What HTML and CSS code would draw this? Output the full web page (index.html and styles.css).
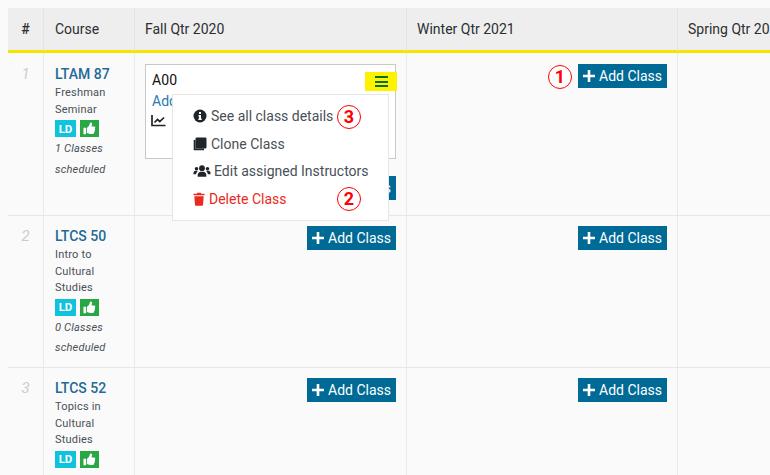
FILE: index.html
```html
<!DOCTYPE html>
<html lang="en">
<head>
<meta charset="utf-8">
<title>Course schedule</title>
<link rel="stylesheet" href="styles.css">
</head>
<body>
<svg class="defs" width="0" height="0" aria-hidden="true">
  <symbol id="plus" viewBox="0 0 12 12"><path d="M4.700 0h2.600v4.700H12v2.600H7.300V12H4.700V7.300H0V4.700h4.700z" fill="currentColor"/></symbol>
  <symbol id="thumb" viewBox="0 0 14 14"><path d="M0.500 6.300h2.800v6.900H0.500z M4.200 6.400c1.500-1 2.700-2.600 3-4.200 .1-.9.400-1.700 1.200-1.700 1.300 0 1.800 1.500 1.200 3.100l-.5 1.300h2.900c1.500 0 1.600 1.700.7 2.200.6.600.5 1.600-.2 2 .4.700.1 1.600-.6 1.900.2 1-.4 1.800-1.600 1.800H7.700c-1.300 0-2.400-.4-3.500-.9z" fill="currentColor"/></symbol>
</svg>
<div class="schedule">
  <div class="row head">
    <div class="cell num">#</div>
    <div class="cell course">Course</div>
    <div class="cell qtr">Fall Qtr 2020</div>
    <div class="cell qtr">Winter Qtr 2021</div>
    <div class="cell qtr last">Spring Qtr 2021</div>
  </div>

  <div class="row r1">
    <div class="cell num"><i>1</i></div>
    <div class="cell course">
      <a class="code">LTAM 87</a>
      <p class="title">Freshman<br>Seminar</p>
      <div class="tags"><span class="ld">LD</span><span class="ok"><svg width="13" height="13"><use href="#thumb"/></svg></span></div>
      <p class="count">1 Classes<br>scheduled</p>
    </div>
    <div class="cell qtr fall">
      <div class="card">
        <div class="card-name">A00</div>
        <a class="card-link">Add</a>
        <svg class="chart" width="15" height="13" viewBox="0 0 15 13"><path d="M1 1v10.500h13.500" fill="none" stroke="#222" stroke-width="1.700"/><path d="M3.500 8.500l3-3 2.300 2 4.200-4" fill="none" stroke="#222" stroke-width="1.700"/></svg>
        <button class="menu-btn" aria-label="Menu"><span></span><span></span><span></span></button>
      </div>
      <div class="under-btn"><button class="add"><svg width="12" height="12"><use href="#plus"/></svg>Add Class</button></div>
      <ul class="menu">
        <li><svg class="mi" width="14" height="14" viewBox="0 0 14 14"><circle cx="7" cy="7" r="6.500" fill="#212529"/><path d="M6 3h2v2H6z M5.500 6h2.500v3.500h.7V11H5.400V9.500H6V7.400h-.5z" fill="#fff"/></svg>See all class details<b class="mark m3">3</b></li>
        <li><svg class="mi" width="14" height="14" viewBox="0 0 14 14"><path d="M3.800 0.500h8.400a1.300 1.300 0 0 1 1.300 1.300v8.400a1.300 1.300 0 0 1-1.300 1.300H3.800a1.300 1.300 0 0 1-1.300-1.300V1.800a1.300 1.300 0 0 1 1.300-1.300z" fill="#212529"/><path d="M1.600 3v9.400h9.400" fill="none" stroke="#212529" stroke-width="1.800"/></svg>Clone Class</li>
        <li><svg class="mi wide" width="18" height="14" viewBox="0 0 18 14"><g fill="#212529"><circle cx="9" cy="4.200" r="2.900"/><path d="M4.700 12.700v-1.600c0-2 1.500-3.300 2.700-3.300h3.200c1.200 0 2.700 1.300 2.700 3.300v1.600z"/><circle cx="3.500" cy="4.700" r="1.800"/><circle cx="14.500" cy="4.700" r="1.800"/><path d="M0.500 10.300V9c0-1.300 1-2.200 2-2.200h1.600l.6.400c-1 .8-1.500 1.900-1.600 3.100z M17.500 10.300V9c0-1.300-1-2.200-2-2.200h-1.600l-.6.400c1 .8 1.500 1.900 1.600 3.100z"/></g></svg>Edit assigned Instructors</li>
        <li class="danger"><svg class="mi trash" width="12" height="14" viewBox="0 0 12 14"><path d="M0.500 1.800h3.300L4.300 0.700h3.400l.5 1.100h3.300v1.500H.5z M1.300 4.300h9.400l-.7 8.700c0 .5-.4 .8-.9 .8H2.900c-.5 0-.9-.3-.9-.8z" fill="#eb2a1d"/></svg>Delete Class<b class="mark m2">2</b></li>
      </ul>
    </div>
    <div class="cell qtr end"><b class="mark m1">1</b><button class="add"><svg width="12" height="12"><use href="#plus"/></svg>Add Class</button></div>
    <div class="cell qtr last"></div>
  </div>

  <div class="row r2">
    <div class="cell num"><i>2</i></div>
    <div class="cell course">
      <a class="code">LTCS 50</a>
      <p class="title">Intro to<br>Cultural<br>Studies</p>
      <div class="tags"><span class="ld">LD</span><span class="ok"><svg width="13" height="13"><use href="#thumb"/></svg></span></div>
      <p class="count">0 Classes<br>scheduled</p>
    </div>
    <div class="cell qtr end"><button class="add"><svg width="12" height="12"><use href="#plus"/></svg>Add Class</button></div>
    <div class="cell qtr end"><button class="add"><svg width="12" height="12"><use href="#plus"/></svg>Add Class</button></div>
    <div class="cell qtr last"></div>
  </div>

  <div class="row r3">
    <div class="cell num"><i>3</i></div>
    <div class="cell course">
      <a class="code">LTCS 52</a>
      <p class="title">Topics in<br>Cultural<br>Studies</p>
      <div class="tags"><span class="ld">LD</span><span class="ok"><svg width="13" height="13"><use href="#thumb"/></svg></span></div>
    </div>
    <div class="cell qtr end"><button class="add"><svg width="12" height="12"><use href="#plus"/></svg>Add Class</button></div>
    <div class="cell qtr end"><button class="add"><svg width="12" height="12"><use href="#plus"/></svg>Add Class</button></div>
    <div class="cell qtr last"></div>
  </div>
</div>
</body>
</html>
```

FILE: styles.css
```css
html, body { margin: 0; height: 100%; overflow: hidden; background: #fafafa; }
body { padding: 8px 0 0 8px; box-sizing: border-box; font-family: Roboto, "Liberation Sans", sans-serif; color: #212529; }
.defs { position: absolute; }
.schedule { width: 900px; }
.row { display: grid; grid-template-columns: 36px 91px 272px 271px 1fr; border-bottom: 1px solid #e6e6e6; box-sizing: border-box; }
.cell { border-right: 1px solid #e9e9e9; box-sizing: border-box; min-width: 0; }
.cell.last { border-right: 0; }
.head { height: 45px; background: #eee; border-bottom: 3px solid #f5e300; font-size: 14px; line-height: 43px; font-weight: 400; color: #2b2f33; }
.head .cell { padding-left: 10px; border-right-color: #e4e4e4; }
.head .course { padding-left: 11px; }
.head .num { padding-left: 0; text-align: center; font-weight: 500; }
.r1 { height: 163px; }
.r2 { height: 152px; }
.r3 { height: 120px; border-bottom: 0; }
.row:not(.head) .num { padding-top: 11px; text-align: center; font-size: 15px; color: #ccc; line-height: 20px; }
.row:not(.head) .course { padding: 11px 0 0 11px; }
.r2 .cell.cell.cell, .r3 .cell.cell.cell { padding-top: 10px; }
.code { display: block; font-size: 14px; font-weight: 500; color: #1f6a96; line-height: 20px; }
.title { margin: 1px 0 0; font-size: 11px; line-height: 16.500px; color: #495057; letter-spacing: .2px; }
.tags { display: flex; gap: 4px; margin-top: 2px; height: 17px; }
.tags span { display: flex; align-items: center; justify-content: center; height: 17px; color: #fff; }
.ld { width: 21px; background: #0fc3dc; font-size: 11.500px; font-weight: 700; }
.ok { width: 19px; background: #28a745; }
.count { margin: 2px 0 0; font-size: 11px; line-height: 20.500px; font-style: italic; color: #495057; letter-spacing: .2px; }
.row:not(.head) .qtr { padding: 11px 10px 0 10px; position: relative; }
.end { display: flex; justify-content: flex-end; align-items: flex-start; }
.add { display: flex; align-items: center; height: 24px; width: 89px; padding: 0 0 0 5px; border: 0; border-radius: 0; background: #006a96; color: #fff; font: 14px/24px Roboto, "Liberation Sans", sans-serif; white-space: nowrap; box-sizing: border-box; }
.add svg { margin-right: 4px; flex: none; }
.under-btn { display: flex; justify-content: flex-end; margin-top: 17px; }
.card { position: relative; height: 95px; border: 1px solid #c8c8c8; background: #fff; box-sizing: border-box; padding: 7px 6px; }
.card-name { font-size: 14px; line-height: 17px; color: #111; font-weight: 400; letter-spacing: .1px; }
.card-link { display: block; font-size: 14px; line-height: 20px; margin-top: 2px; color: #2a7ab0; }
.chart { display: block; margin: 3px 0 0 -1px; }
.menu-btn { position: absolute; top: 7px; right: -2px; width: 32px; height: 19px; padding: 0; border: 0; background: #fff200; display: flex; flex-direction: column; align-items: center; justify-content: center; gap: 2.500px; }
.menu-btn span { display: block; width: 13px; height: 2px; background: #0a6e20; }
.menu { position: absolute; left: 37px; top: 41px; width: 217px; height: 127px; margin: 0; padding: 7.500px 0 0; list-style: none; background: #fff; border: 1px solid #e6e6e6; box-sizing: border-box; z-index: 2; font-size: 14px; color: #495057; }
.menu li { position: relative; display: flex; align-items: center; height: 27.500px; padding-left: 20px; white-space: nowrap; }
.mi { margin-right: 4px; flex: none; }
.mi.wide { margin-right: 3px; }
.danger.danger { color: #eb2a1d; }
.mark { display: inline-flex; align-items: center; justify-content: center; width: 24px; height: 24px; border: 1.500px solid #f00; border-radius: 50%; box-sizing: border-box; color: #f00; background: #fff; font: 700 18px/1 Roboto, "Liberation Sans", sans-serif; flex: none; }
.m3, .m2 { position: absolute; left: 164px; top: 2px; }
.m1 { margin: 1px 6px 0 0; }
```
